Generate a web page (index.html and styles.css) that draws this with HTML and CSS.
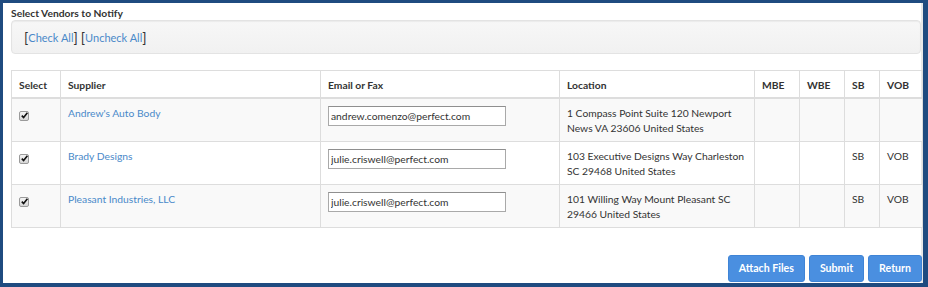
FILE: index.html
```html
<!DOCTYPE html>
<html>
<head>
<meta charset="utf-8">
<title>Select Vendors to Notify</title>
<link rel="stylesheet" href="styles.css">
</head>
<body>
<div class="frame">
  <div class="title">Select Vendors to Notify</div>
  <div class="well">
    <span class="br">[</span><a href="#">Check All</a><span class="br">]</span>
    <span class="br">[</span><a href="#">Uncheck All</a><span class="br">]</span>
  </div>
  <table class="vendors">
    <colgroup>
      <col class="c-select"><col class="c-supplier"><col class="c-email"><col class="c-loc">
      <col class="c-mbe"><col class="c-wbe"><col class="c-sb"><col class="c-vob">
    </colgroup>
    <thead>
      <tr><th>Select</th><th>Supplier</th><th>Email or Fax</th><th>Location</th><th>MBE</th><th>WBE</th><th>SB</th><th>VOB</th></tr>
    </thead>
    <tbody>
      <tr class="odd">
        <td><span class="cb"><svg width="9" height="9" viewBox="0 0 9 9"><path d="M1.8 4.6 L3.6 6.6 L7.4 1.8" fill="none" stroke="#111" stroke-width="1.6"/></svg></span></td>
        <td><a href="#">Andrew's Auto Body</a></td>
        <td><input class="email" type="text" value="andrew.comenzo@perfect.com"></td>
        <td>1 Compass Point Suite 120 Newport News VA 23606 United States</td>
        <td></td><td></td><td></td><td></td>
      </tr>
      <tr>
        <td><span class="cb"><svg width="9" height="9" viewBox="0 0 9 9"><path d="M1.8 4.6 L3.6 6.6 L7.4 1.8" fill="none" stroke="#111" stroke-width="1.6"/></svg></span></td>
        <td><a href="#">Brady Designs</a></td>
        <td><input class="email" type="text" value="julie.criswell@perfect.com"></td>
        <td>103 Executive Designs Way Charleston SC 29468 United States</td>
        <td></td><td></td><td>SB</td><td>VOB</td>
      </tr>
      <tr class="odd">
        <td><span class="cb"><svg width="9" height="9" viewBox="0 0 9 9"><path d="M1.8 4.6 L3.6 6.6 L7.4 1.8" fill="none" stroke="#111" stroke-width="1.6"/></svg></span></td>
        <td><a href="#">Pleasant Industries, LLC</a></td>
        <td><input class="email" type="text" value="julie.criswell@perfect.com"></td>
        <td>101 Willing Way Mount Pleasant SC 29466 United States</td>
        <td></td><td></td><td>SB</td><td>VOB</td>
      </tr>
    </tbody>
  </table>
  <div class="actions">
    <button class="btn">Attach Files</button>
    <button class="btn">Submit</button>
    <button class="btn">Return</button>
  </div>
</div>
</body>
</html>
```
FILE: styles.css
```css
html, body {
  margin: 0;
  padding: 0;
  background: #ffffff;
}
body {
  font-family: Lato, "Open Sans", "Liberation Sans", sans-serif;
  font-size: 10.3px;
  line-height: 15px;
  color: #333333;
}
.frame {
  width: 928px;
  height: 287px;
  box-sizing: border-box;
  border-style: solid;
  border-color: #1f4b80;
  border-width: 3px 5px 4px 3px;
  padding: 4px 1px 0 8px;
  box-shadow: inset -2px 0 0 #e8e8e8;
  overflow: hidden;
}
.title {
  font-weight: bold;
  line-height: 13px;
  color: #333333;
}
.well {
  height: 31px;
  box-sizing: content-box;
  border: 1px solid #e3e3e3;
  border-radius: 4px;
  background: linear-gradient(#f7f7f7, #f1f1f1);
  box-shadow: inset 0 1px 1px rgba(0,0,0,0.05);
  padding: 1px 12px 0 12px;
  display: flex;
  align-items: center;
  margin-right: 1px;
}
.well a {
  color: #4a89c9;
  text-decoration: none;
  font-size: 11px;
}
.well .br {
  font-size: 14px;
  color: #333;
}
.well .br + .br {
  margin-left: 3px;
}
a {
  color: #4a89c9;
  text-decoration: none;
}
.vendors {
  margin-top: 16px;
  width: 911px;
  table-layout: fixed;
  border-collapse: collapse;
}
.c-select { width: 49px; }
.c-supplier { width: 260px; }
.c-email { width: 239px; }
.c-loc { width: 195px; }
.c-mbe { width: 45px; }
.c-wbe { width: 45px; }
.c-sb { width: 35px; }
.c-vob { width: 43px; }
.vendors th, .vendors td {
  border: 1px solid #dddddd;
  padding: 7px 7px 5px 7px;
  text-align: left;
  vertical-align: top;
  line-height: 15px;
}
.vendors th {
  font-weight: bold;
  padding-bottom: 4px;
  border-bottom: 2px solid #dddddd;
}
.vendors tr.odd td {
  background: #f9f9f9;
}
.cb {
  display: inline-block;
  width: 8px;
  height: 8px;
  border: 1px solid #9a9a9a;
  border-radius: 2px;
  background: linear-gradient(#f4f4f4, #d6d6d6);
  margin-top: 5px;
  vertical-align: top;
}
.cb svg {
  display: block;
  margin: -1px 0 0 0;
}
.email {
  box-sizing: border-box;
  width: 178px;
  height: 20px;
  margin: 0;
  padding: 0 2px;
  border: 1px solid #a9a9a9;
  border-top-color: #8f8f8f;
  font-family: Lato, "Open Sans", "Liberation Sans", sans-serif;
  font-size: 10.3px;
  color: #333;
  background: #fff;
  display: block;
}
.actions {
  margin-top: 27px;
  display: flex;
  justify-content: flex-end;
  gap: 4px;
}
.btn {
  font-family: Lato, "Open Sans", "Liberation Sans", sans-serif;
  font-size: 10.6px;
  font-weight: bold;
  line-height: 15px;
  color: #ffffff;
  background: #4a8fe0;
  border: 1px solid #3f84d6;
  border-radius: 3px;
  padding: 5px 10px;
  height: 27px;
  box-sizing: border-box;
}
```
